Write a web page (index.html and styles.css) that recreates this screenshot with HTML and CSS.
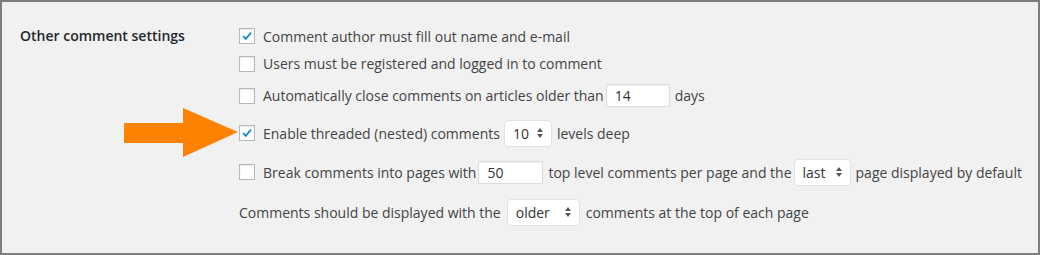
FILE: index.html
```
<!DOCTYPE html>
<html>
<head>
    <title>Discussion Settings</title>
    <link rel="stylesheet" href="styles.css">
</head>
<body>
    <div class="frame">
        <div class="form-row">
            <div class="row-title">Other comment settings</div>
            <div class="options">
                <label class="opt">
                    <span class="check on"><svg viewBox="0 0 16 16"><path d="M3.6 8.2 L6.6 11.2 L12.6 4.2"/></svg></span>
                    Comment author must fill out name and e-mail
                </label>
                <label class="opt">
                    <span class="check"></span>
                    Users must be registered and logged in to comment
                </label>
                <label class="opt">
                    <span class="check"></span>
                    Automatically close comments on articles older than
                    <span class="field w-days">14</span>
                    days
                </label>
                <label class="opt">
                    <span class="check on"><svg viewBox="0 0 16 16"><path d="M3.6 8.2 L6.6 11.2 L12.6 4.2"/></svg></span>
                    Enable threaded (nested) comments
                    <span class="select w-depth">10<svg class="updown" viewBox="0 0 6 10"><path d="M0 4 L3 0 L6 4 Z M0 6 L3 10 L6 6 Z"/></svg></span>
                    levels deep
                </label>
                <label class="opt">
                    <span class="check"></span>
                    Break comments into pages with
                    <span class="field w-pages">50</span>
                    top level comments per page and the
                    <span class="select w-last">last<svg class="updown" viewBox="0 0 6 10"><path d="M0 4 L3 0 L6 4 Z M0 6 L3 10 L6 6 Z"/></svg></span>
                    page displayed by default
                </label>
                <div class="opt">
                    Comments should be displayed with the
                    <span class="select w-order">older<svg class="updown" viewBox="0 0 6 10"><path d="M0 4 L3 0 L6 4 Z M0 6 L3 10 L6 6 Z"/></svg></span>
                    comments at the top of each page
                </div>
            </div>
        </div>

        <!-- Annotation pointing at the threaded comments option. -->
        <svg class="arrow" viewBox="0 0 116 50">
            <path d="M0 15 H59 V0 L114 24 L59 49 V35 H0 Z"/>
        </svg>
    </div>
</body>
</html>
```

FILE: styles.css
```
body, html {
    margin: 0;
    padding: 0;
    font-family: "Open Sans", "Liberation Sans", sans-serif;
    font-size: 14px;
    color: #444;
}
.frame {
    position: relative;
    box-sizing: border-box;
    width: 1040px;
    height: 255px;
    padding: 20px 0 0 18px;
    background-color: #f1f1f1;
    border: 2px solid #7d7d7d;
}
.form-row {
    display: flex;
}
.row-title {
    width: 219px;
    height: 28px;
    line-height: 28px;
    font-weight: 600;
    color: #23282d;
}
.options {
    display: grid;
    grid-template-rows: 28px 27px 37px 38px 40px 40px;
}
.opt {
    display: flex;
    align-items: center;
    gap: 2px;
    white-space: nowrap;
}

/* Checkboxes. */
.check {
    box-sizing: border-box;
    width: 16px;
    height: 16px;
    margin-right: 6px;
    background-color: #fff;
    border: 1px solid #b4b9be;
    box-shadow: inset 0 1px 2px rgba(0, 0, 0, 0.1);
}
.check svg {
    display: block;
    width: 14px;
    height: 14px;
}
.check path {
    fill: none;
    stroke: #1e8cbe;
    stroke-width: 2.2;
}

/* Text fields and drop downs. */
.field, .select {
    box-sizing: border-box;
    display: flex;
    align-items: center;
    padding: 0 8px;
    margin-right: 3px;
    background-color: #fff;
    color: #333;
}
.field {
    height: 23px;
    border: 1px solid #ddd;
    box-shadow: inset 0 1px 2px rgba(0, 0, 0, 0.07);
}
.select {
    justify-content: space-between;
    height: 27px;
    border: 1px solid #e2e2e2;
    border-radius: 4px;
}
.updown {
    width: 6px;
    height: 10px;
    fill: #555;
}
.w-days { width: 64px; }
.w-pages { width: 65px; }
.w-depth { width: 48px; margin-left: 2px; }
.w-last { width: 57px; }
.w-order { width: 73px; margin: 0 4px; }

.arrow {
    position: absolute;
    left: 122px;
    top: 106px;
    width: 116px;
    height: 50px;
    fill: #fd8204;
}
```
